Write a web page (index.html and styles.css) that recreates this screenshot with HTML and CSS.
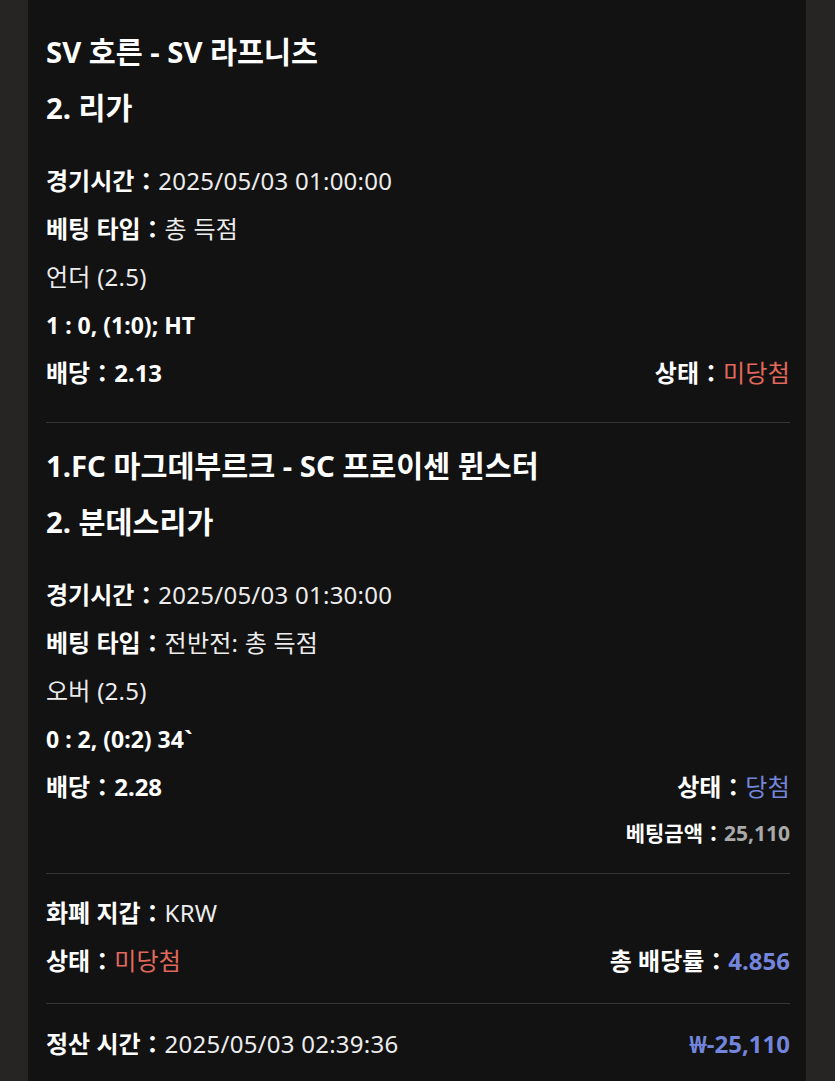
FILE: index.html
```html
<!DOCTYPE html>
<html lang="ko">
<head>
<meta charset="utf-8">
<link rel="stylesheet" href="styles.css">
</head>
<body>
<div class="card">
  <section class="bet first">
    <div class="titles">
      <div class="title">SV 호른 - SV 라프니츠</div>
      <div class="title">2. 리가</div>
    </div>
    <div class="rows">
      <div class="row"><span class="label">경기시간：</span><span class="val">2025/05/03 01:00:00</span></div>
      <div class="row"><span class="label">베팅 타입：</span><span class="val">총 득점</span></div>
      <div class="row"><span class="val">언더 (2.5)</span></div>
      <div class="row"><span class="label score">1 : 0, (1:0); HT</span></div>
      <div class="row split">
        <div><span class="label">배당：</span><span class="label">2.13</span></div>
        <div><span class="label">상태：</span><span class="val red">미당첨</span></div>
      </div>
    </div>
  </section>
  <section class="bet second">
    <div class="titles">
      <div class="title">1.FC 마그데부르크 - SC 프로이센 뮌스터</div>
      <div class="title">2. 분데스리가</div>
    </div>
    <div class="rows">
      <div class="row"><span class="label">경기시간：</span><span class="val">2025/05/03 01:30:00</span></div>
      <div class="row"><span class="label">베팅 타입：</span><span class="val">전반전: 총 득점</span></div>
      <div class="row"><span class="val">오버 (2.5)</span></div>
      <div class="row"><span class="label score">0 : 2, (0:2) 34`</span></div>
      <div class="row split">
        <div><span class="label">배당：</span><span class="label">2.28</span></div>
        <div><span class="label">상태：</span><span class="val blue">당첨</span></div>
      </div>
      <div class="row amount"><span class="label">베팅금액：</span><span class="label gray">25,110</span></div>
    </div>
  </section>
  <section class="summary">
    <div class="row"><span class="label">화폐 지갑：</span><span class="val">KRW</span></div>
    <div class="row split">
      <div><span class="label">상태：</span><span class="val red">미당첨</span></div>
      <div><span class="label">총 배당률：</span><span class="label blue">4.856</span></div>
    </div>
  </section>
  <section class="settle">
    <div class="row split">
      <div><span class="label">정산 시간：</span><span class="val">2025/05/03 02:39:36</span></div>
      <div><span class="label blue">₩-25,110</span></div>
    </div>
  </section>
</div>
</body>
</html>
```
FILE: styles.css
```css
html, body {
  margin: 0;
  padding: 0;
  background: #262523;
  font-family: "Noto Sans", "Noto Sans CJK KR", sans-serif;
  color: #f2f2f2;
}
.card {
  margin: 0 29px 0 28px;
  background: #121212;
  padding: 9px 16px 0 18px;
  min-height: 1081px;
  box-sizing: border-box;
}
section {
  padding: 15px 0 25px;
  border-bottom: 1px solid #363636;
}
section.second { padding-bottom: 18px; }
section.summary { padding-bottom: 18px; }
section.settle { border-bottom: none; padding-top: 16px; }
.title {
  font-size: 29.3px;
  font-weight: 700;
  line-height: 56px;
  color: #fff;
}
.titles { margin-bottom: 21px; }
.row {
  font-size: 24px;
  line-height: 48px;
  white-space: nowrap;
}
.label { font-weight: 700; color: #fff; }
.label.score { font-size: 23px; }
.val { font-weight: 400; color: #ececec; letter-spacing: 0.25px; }
.split {
  display: flex;
  justify-content: space-between;
}
.red { color: #e0695c; }
.blue { color: #7386dc; }
.gray { color: #a9a9a9; }
.amount {
  font-size: 21px;
  line-height: 44px;
  text-align: right;
}
```
